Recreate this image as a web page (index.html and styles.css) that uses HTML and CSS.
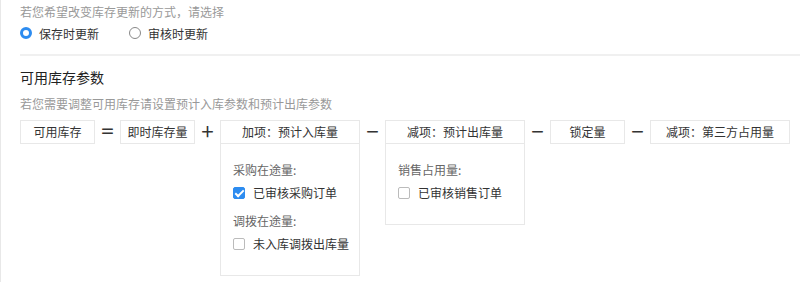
FILE: index.html
```html
<!DOCTYPE html>
<html lang="zh-CN">
<head>
    <meta charset="UTF-8">
    <meta name="viewport" content="width=device-width, initial-scale=1.0">
    <title>库存参数设置</title>
    <link rel="stylesheet" href="styles.css">
</head>
<body>
    <div class="page">
        <p class="hint top-hint">若您希望改变库存更新的方式，请选择</p>
        <div class="radios">
            <label class="radio checked"><span class="dot"></span>保存时更新</label>
            <label class="radio"><span class="dot"></span>审核时更新</label>
        </div>
        <div class="divider"></div>

        <h3 class="title">可用库存参数</h3>
        <p class="hint">若您需要调整可用库存请设置预计入库参数和预计出库参数</p>

        <div class="formula">
            <div class="term small"><div class="box">可用库存</div></div>
            <span class="op">＝</span>
            <div class="term small"><div class="box">即时库存量</div></div>
            <span class="op">＋</span>
            <div class="term wide">
                <div class="box">加项：预计入库量</div>
                <div class="panel">
                    <p class="group-label">采购在途量:</p>
                    <label class="check checked"><span class="square"></span>已审核采购订单</label>
                    <p class="group-label next">调拨在途量:</p>
                    <label class="check"><span class="square"></span>未入库调拨出库量</label>
                </div>
            </div>
            <span class="op">－</span>
            <div class="term wide">
                <div class="box">减项：预计出库量</div>
                <div class="panel">
                    <p class="group-label">销售占用量:</p>
                    <label class="check"><span class="square"></span>已审核销售订单</label>
                </div>
            </div>
            <span class="op">－</span>
            <div class="term small"><div class="box">锁定量</div></div>
            <span class="op">－</span>
            <div class="term wide"><div class="box">减项：第三方占用量</div></div>
        </div>
    </div>
</body>
</html>
```

FILE: styles.css
```css
body {
    margin: 0;
    font-family: "Noto Sans CJK SC", "Liberation Sans", sans-serif;
    font-size: 12px;
    color: #333;
    background: #fff;
}
.page {
    border-left: 1px solid #e8e8e8;
    padding-left: 19px;
    height: 282px;
    box-sizing: border-box;
    padding-top: 2px;
}
p {
    margin: 0;
}
.hint {
    color: #999;
    line-height: 20px;
}
.radios {
    display: flex;
    height: 22px;
    align-items: center;
}
.radio {
    display: flex;
    align-items: center;
    margin-right: 30px;
    color: #333;
}
.radio .dot {
    width: 12px;
    height: 12px;
    border: 1px solid #888;
    border-radius: 50%;
    box-sizing: border-box;
    margin-right: 7px;
}
.radio.checked .dot {
    border: 3.5px solid #2d8cf0;
}
.divider {
    height: 2px;
    background: #f0f0f0;
    margin-top: 10px;
}
.title {
    margin: 11px 0 0;
    font-size: 14px;
    font-weight: normal;
    line-height: 20px;
    color: #222;
}
.title + .hint {
    margin-top: 7px;
}
.formula {
    display: flex;
    align-items: flex-start;
    margin-top: 6px;
}
.term.small {
    width: 75px;
}
.term.wide {
    width: 140px;
}
.box {
    height: 24px;
    line-height: 22px;
    border: 1px solid #e8e8e8;
    box-sizing: border-box;
    text-align: center;
    color: #333;
    white-space: nowrap;
}
.op {
    width: 25px;
    text-align: center;
    line-height: 22px;
    font-size: 15px;
    font-weight: bold;
    color: #333;
}
.panel {
    border: 1px solid #e8e8e8;
    border-top: none;
    padding: 16px 8px 21px 12px;
}
.group-label {
    line-height: 20px;
    color: #666;
}
.group-label.next {
    margin-top: 8px;
}
.check {
    display: flex;
    align-items: center;
    margin-top: 3px;
    line-height: 20px;
    white-space: nowrap;
}
.check .square {
    width: 12px;
    height: 12px;
    border: 1px solid #bbb;
    border-radius: 2px;
    box-sizing: border-box;
    margin-right: 8px;
    position: relative;
}
.check.checked .square {
    background: #2d8cf0;
    border-color: #2d8cf0;
}
.check.checked .square::after {
    content: "";
    position: absolute;
    left: 3px;
    top: 0px;
    width: 3px;
    height: 7px;
    border: solid #fff;
    border-width: 0 2px 2px 0;
    transform: rotate(45deg);
}
```
